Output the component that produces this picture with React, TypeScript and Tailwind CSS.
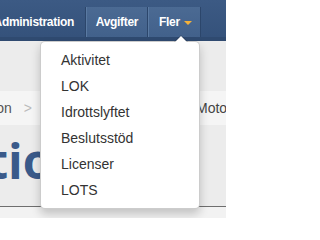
const MENU_ITEMS = ['Aktivitet', 'LOK', 'Idrottslyftet', 'Beslutsstöd', 'Licenser', 'LOTS']

const navFont = { fontFamily: '"Liberation Sans", Arial, sans-serif' }

export default function App() {
  return (
    <div
      className="relative h-[218px] w-[226px] overflow-hidden bg-[#ececec]"
      style={{ fontFamily: '"Liberation Sans", Arial, sans-serif' }}
    >
      {/* Top navbar */}
      <nav className="flex h-[41px] items-start bg-gradient-to-b from-[#3c5a84] to-[#34517a] pt-[7px] shadow-[inset_0_-4px_0_#2f4a70]">
        <div className="flex h-[30px] w-[86px] items-center justify-end overflow-hidden border-r border-[#2c466b] pr-[11px]">
          <span className="whitespace-nowrap text-[12px] font-bold tracking-[-0.3px] text-white" style={navFont}>
            Administration
          </span>
        </div>
        <div className="flex h-[30px] w-[62px] items-center justify-center border-x border-l-[#5a7aa2] border-r-[#2c466b] bg-gradient-to-b from-[#4b6a93] to-[#42618b]">
          <span className="text-[12px] font-bold tracking-[-0.3px] text-white" style={navFont}>
            Avgifter
          </span>
        </div>
        <div className="flex h-[30px] w-[53px] items-center border-x border-l-[#5a7aa2] border-r-[#2c466b] bg-gradient-to-b from-[#4b6a93] to-[#42618b] pl-[10px]">
          <span className="text-[12px] font-bold tracking-[-0.3px] text-white" style={navFont}>
            Fler
          </span>
          <span className="ml-[4px] mt-[1px] h-0 w-0 border-x-[4px] border-t-[4px] border-x-transparent border-t-[#f4b13a]" />
        </div>
      </nav>

      {/* Page content behind the menu */}
      <div className="h-[50px]" />
      <div className="flex h-[34px] items-center justify-between bg-[#f5f5f5] text-[14px] text-[#555]">
        <div className="flex w-[32px] items-center justify-end overflow-hidden">
          <span className="whitespace-nowrap">Administration</span>
          <span className="ml-[12px] text-[#bbb]">&gt;</span>
        </div>
        <div className="w-[30px] overflow-hidden">
          <span className="whitespace-nowrap text-[#444]">Motorsport</span>
        </div>
      </div>
      <div className="h-[81px] pt-[12px]">
        <div className="flex w-[84px] justify-end overflow-hidden">
          <span
            className="whitespace-nowrap text-[48px] font-bold leading-[48px] text-[#3a5a8a]"
            style={{ fontFamily: '"Open Sans", sans-serif' }}
          >
            Administration
          </span>
        </div>
      </div>
      <div className="h-[12px] border-t border-[#6e6e6e] bg-[#f2f2f2]" />

      {/* Dropdown menu */}
      <div className="absolute left-[40px] top-[41px] w-[160px] rounded-[5px] border border-black/20 bg-white py-[5px] shadow-[0_5px_10px_rgba(0,0,0,0.2)]">
        <span className="absolute -top-[7px] right-[11px] h-0 w-0 border-x-[7px] border-b-[7px] border-x-transparent border-b-black/20" />
        <span className="absolute -top-[6px] right-[12px] h-0 w-0 border-x-[6px] border-b-[6px] border-x-transparent border-b-white" />
        <ul>
          {MENU_ITEMS.map((item) => (
            <li key={item} className="flex h-[26px] items-center px-[20px] text-[14px] text-[#333]">
              {item}
            </li>
          ))}
        </ul>
      </div>
    </div>
  )
}
